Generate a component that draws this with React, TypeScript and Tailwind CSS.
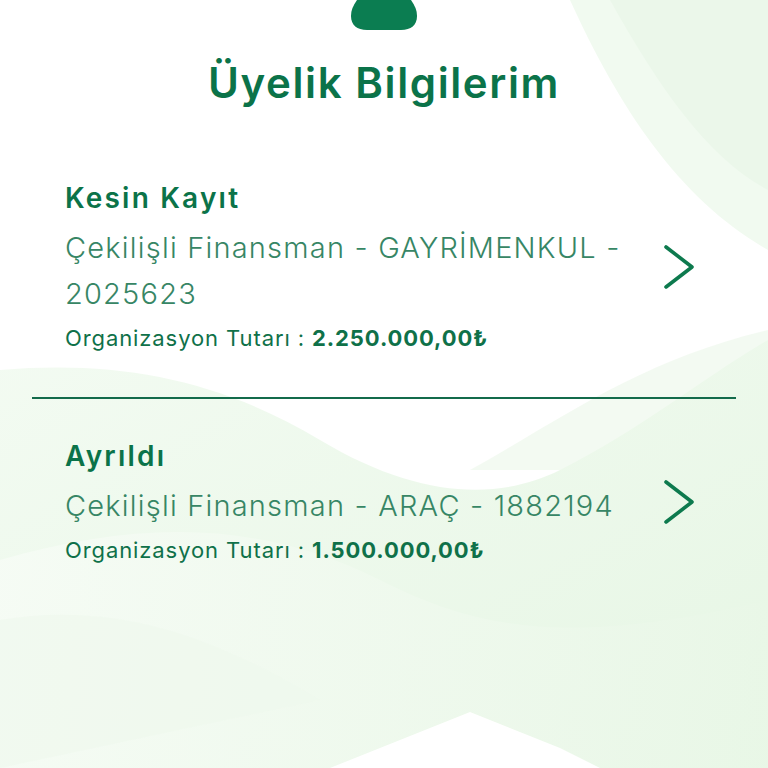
import React from 'react';

const memberships = [
  { status: 'Kesin Kayıt', title: 'Çekilişli Finansman - GAYRİMENKUL - 2025623', amount: '2.250.000,00₺' },
  { status: 'Ayrıldı', title: 'Çekilişli Finansman - ARAÇ - 1882194', amount: '1.500.000,00₺' },
];

const Waves = () => (
  <svg className="absolute inset-0 h-full w-full" viewBox="0 0 768 768" preserveAspectRatio="none">
    <defs>
      <linearGradient id="wg1" x1="0" y1="0" x2="1" y2="1">
        <stop offset="0" stopColor="#f3fbf2" />
        <stop offset="1" stopColor="#e6f6e4" />
      </linearGradient>
      <linearGradient id="wg2" x1="0" y1="0" x2="1" y2="0">
        <stop offset="0" stopColor="#f7fcf6" />
        <stop offset="1" stopColor="#e9f7e7" />
      </linearGradient>
    </defs>
    <path d="M570 0 C620 110 680 200 768 250 L768 0 Z" fill="#f1faf0" />
    <path d="M610 0 C660 90 710 160 768 190 L768 0 Z" fill="#ebf7ea" />
    <path d="M768 330 C640 360 560 420 470 470 L768 470 Z" fill="#f2faf1" opacity="0.9" />
    <path d="M0 370 C120 360 220 380 320 440 C420 500 500 500 560 470 C640 430 700 380 768 340 L768 768 L0 768 Z" fill="url(#wg1)" />
    <path d="M0 560 C140 520 260 520 380 580 C470 625 560 650 768 600 L768 768 L0 768 Z" fill="url(#wg2)" opacity="0.8" />
    <path d="M330 768 L470 712 L560 748 L600 768 Z" fill="#ffffff" />
    <path d="M0 620 C120 600 220 640 320 700 L0 768 Z" fill="#eef8ec" opacity="0.6" />
  </svg>
);

const Chevron = () => (
  <svg width="34" height="46" viewBox="0 0 34 46" fill="none" className="shrink-0">
    <path d="M4 3 L30 23 L4 43" stroke="#0d7a4e" strokeWidth="3.6" strokeLinecap="round" strokeLinejoin="round" />
  </svg>
);

export default function App() {
  return (
    <div className="relative h-[768px] w-full overflow-hidden bg-white" style={{ fontFamily: 'Inter, "Noto Sans", sans-serif' }}>
      <Waves />
      <div className="relative flex flex-col">
        <div className="flex justify-center">
          <svg width="66" height="30" viewBox="0 0 66 30">
            <path d="M6 0 L60 0 C64 6 66 10 66 16 C66 25 60 30 50 30 L16 30 C6 30 0 25 0 16 C0 10 2 6 6 0 Z" fill="#0b7d51" />
          </svg>
        </div>
        <h1 className="mt-[28px] text-center text-[42px] font-semibold leading-[50px] tracking-[1.6px] text-[#0b7349]">Üyelik Bilgilerim</h1>

        <div className="mt-[72px] flex flex-col">
          {memberships.map((m, i) => (
            <React.Fragment key={m.status}>
              {i > 0 && <div className="mx-8 mt-[44px] mb-[39px] h-[2px] bg-[#136b4b]" />}
              <div className="flex items-center pl-[65px] pr-[72px]">
                <div className="flex-1">
                  <div className="text-[28px] font-semibold leading-[36px] tracking-[2.2px] text-[#0b7349]">{m.status}</div>
                  <div className="mt-[9px] max-w-[560px] text-[29px] font-light leading-[46px] tracking-[1.2px] text-[#378665]">{m.title}</div>
                  <div className="mt-[6px] text-[22px] leading-[30px] tracking-[0.9px] text-[#0f7149]">
                    Organizasyon Tutarı : <span className="font-bold">{m.amount}</span>
                  </div>
                </div>
                <Chevron />
              </div>
            </React.Fragment>
          ))}
        </div>
      </div>
    </div>
  );
}
